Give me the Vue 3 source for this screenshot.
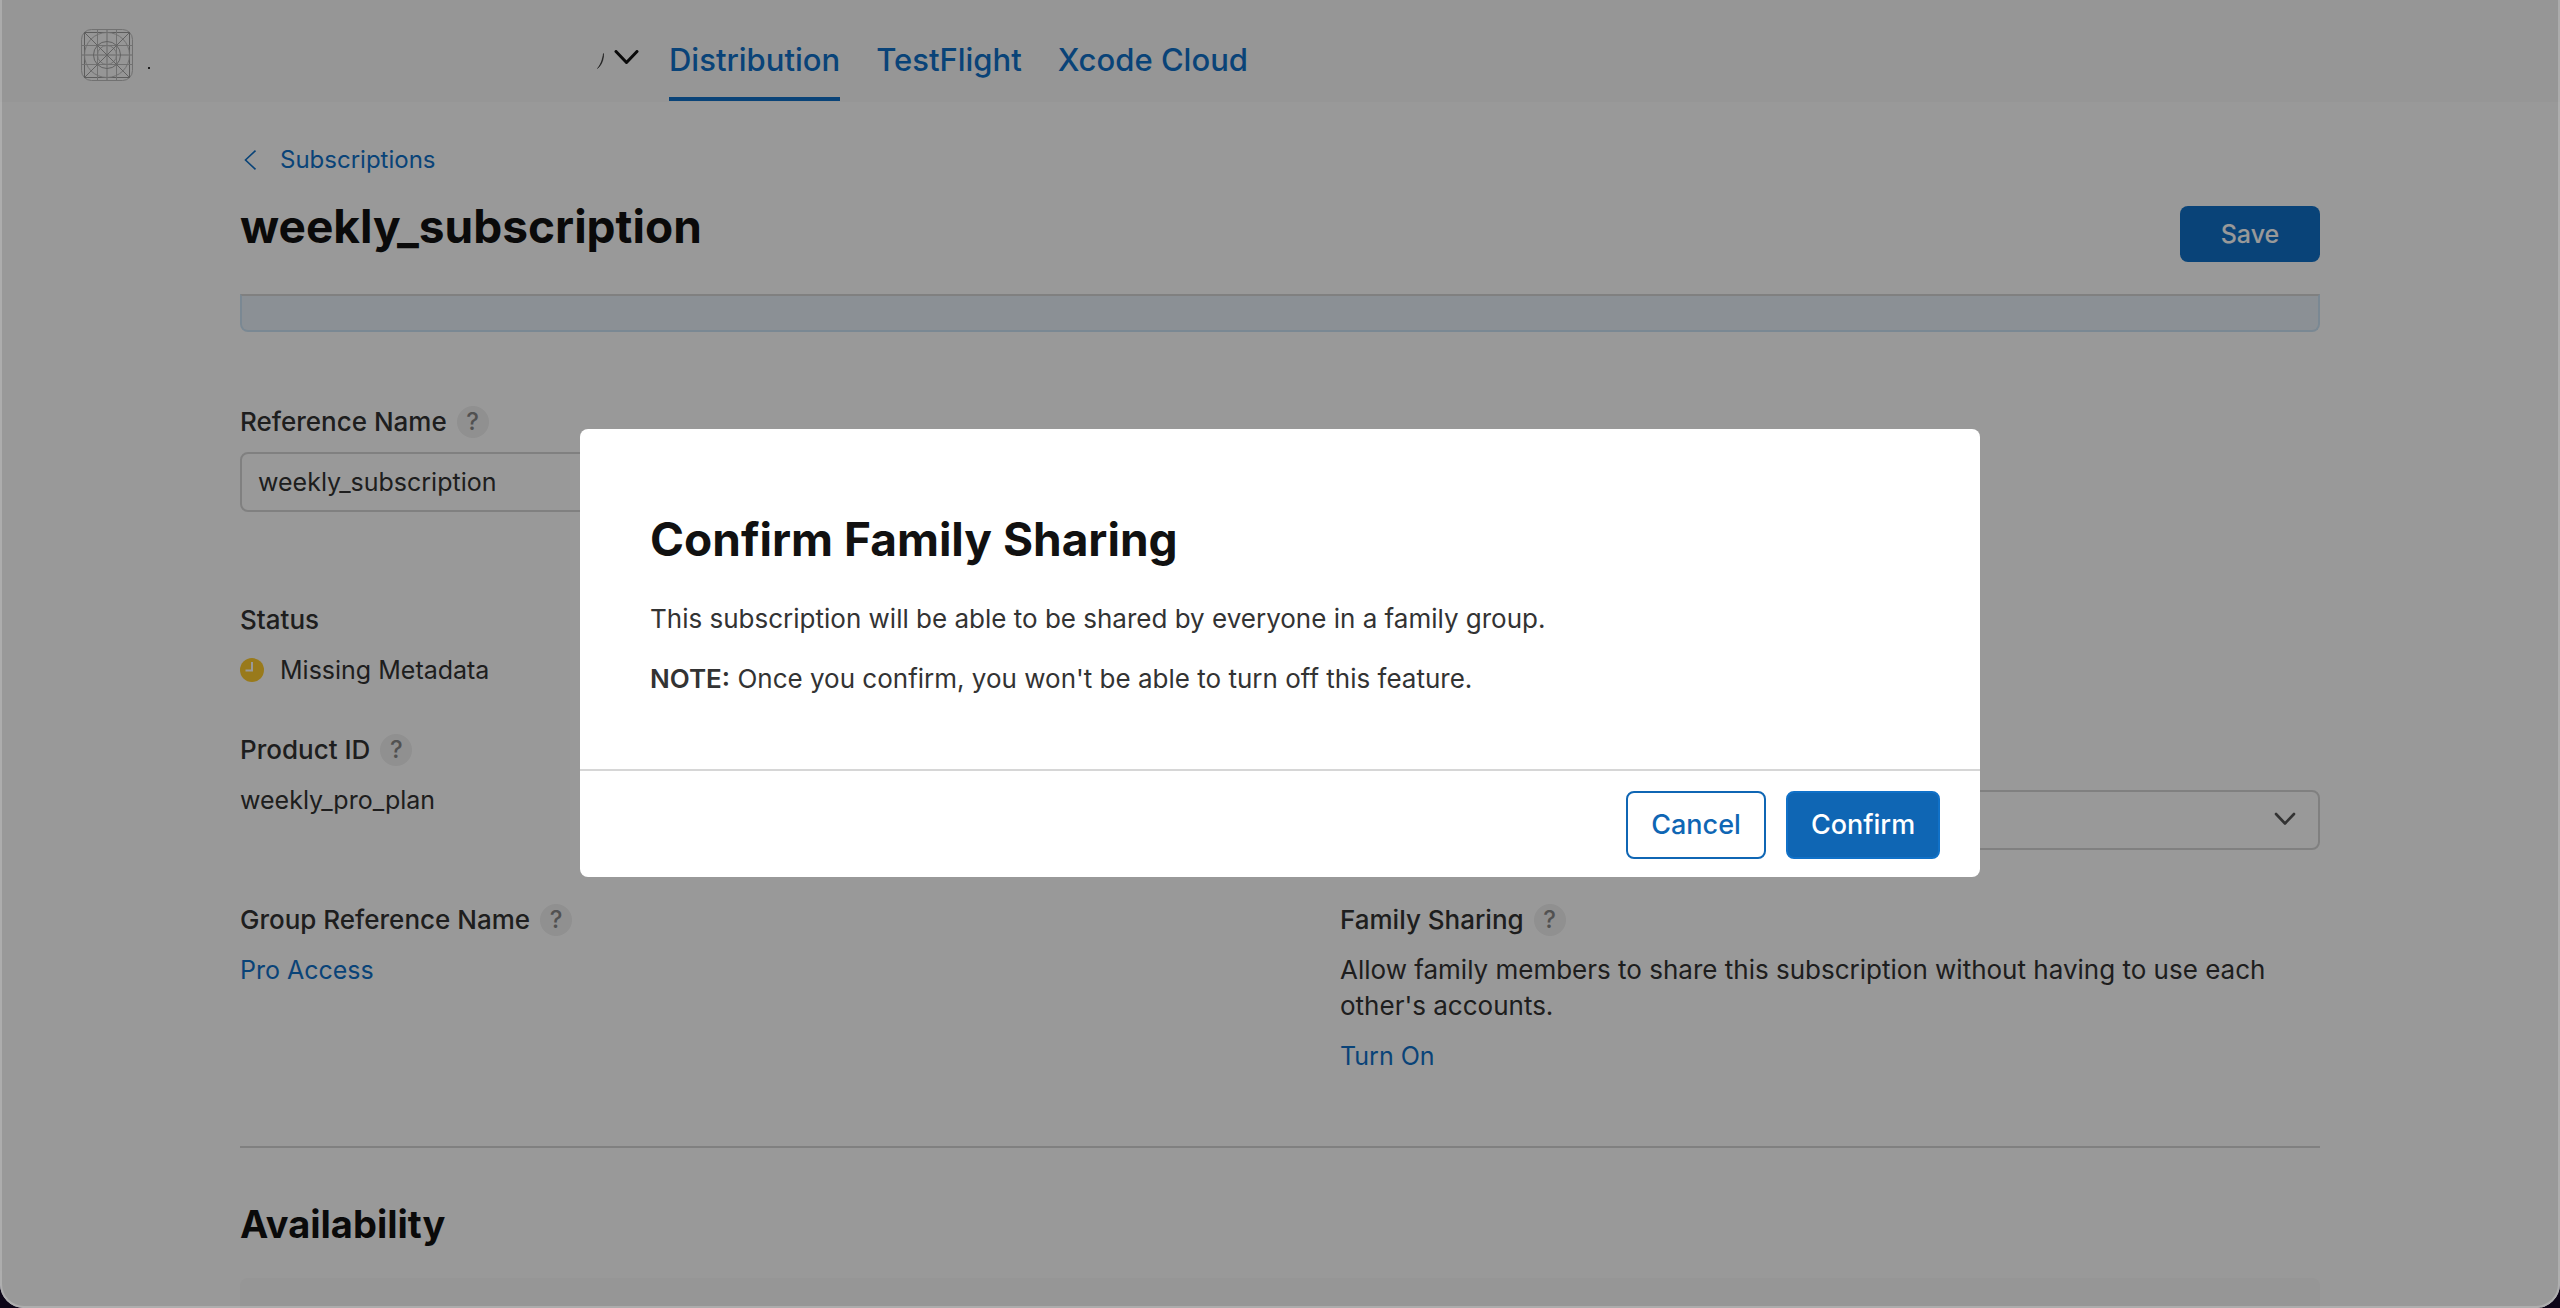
<script setup>
import { ref } from 'vue'

const referenceName = ref('weekly_subscription')
const tabs = [
  { label: 'Distribution', active: true },
  { label: 'TestFlight', active: false },
  { label: 'Xcode Cloud', active: false },
]
</script>

<template>
  <div class="window">
    <header class="topbar">
      <div class="app-id">
        <svg class="app-icon" width="52" height="52" viewBox="0 0 52 52" fill="none" stroke="#bcbcbc">
          <path d="M26 0V52M0 26H52" stroke-width="2" stroke="#d4d4d4" />
          <rect x="0.5" y="0.5" width="51" height="51" rx="10" />
          <rect x="3.5" y="3.5" width="45" height="45" stroke="#9c9c9c" />
          <circle cx="26" cy="26" r="22.5" />
          <circle cx="26" cy="26" r="13.5" stroke="#a4a4a4" />
          <circle cx="26" cy="26" r="9.5" />
          <path d="M16.5 0V52M35.5 0V52M0 16.5H52M0 35.5H52" />
          <path d="M3.5 3.5L48.5 48.5M48.5 3.5L3.5 48.5" stroke="#a4a4a4" />
        </svg>
        <i class="dot"></i>
      </div>
      <button class="switcher" aria-label="Switch app">
        <svg width="42" height="20" viewBox="0 0 42 20" fill="none">
          <path d="M6.5 3.5C6.8 9 5 14.5 0.5 18.5C4.5 13.5 5.5 9 6.5 3.5Z" fill="#222" stroke="#333" stroke-width="0.6" />
          <path d="M19 1.5L29.5 12.5L40 1.5" stroke="#111" stroke-width="3" stroke-linecap="round" stroke-linejoin="round" />
        </svg>
      </button>
      <nav class="tabs">
        <a v-for="tab in tabs" :key="tab.label" href="#" class="tab" :class="{ active: tab.active }">{{ tab.label }}</a>
      </nav>
    </header>

    <main class="content">
      <a href="#" class="back">
        <svg width="24" height="20" viewBox="0 0 24 20" fill="none" stroke="currentColor" stroke-width="1.6">
          <path d="M15.5 0.7L5.5 10L15.5 19.3" />
        </svg>
        <span>Subscriptions</span>
      </a>
      <div class="title-row">
        <h1>weekly_subscription</h1>
        <button class="save">Save</button>
      </div>
      <div class="banner"></div>

      <div class="columns top">
        <div class="field">
          <div class="label-row">
            <label for="reference-name">Reference Name</label>
            <button class="help" aria-label="About the reference name">?</button>
          </div>
          <input id="reference-name" v-model="referenceName" class="control" type="text" />
        </div>
      </div>

      <div class="columns">
        <div class="stack">
          <div class="status-field">
            <div class="label-row"><span class="label">Status</span></div>
            <p class="status">
              <svg width="24" height="24" viewBox="0 0 24 24">
                <circle cx="12" cy="12" r="12" fill="#ffcc2e" />
                <path d="M12 4V12.5H5.5" fill="none" stroke="#fff" stroke-width="2" />
              </svg>
              <span>Missing Metadata</span>
            </p>
          </div>
          <div>
            <div class="label-row">
              <span class="label">Product ID</span>
              <button class="help" aria-label="About the product ID">?</button>
            </div>
            <p>weekly_pro_plan</p>
          </div>
        </div>
        <div class="select-cell">
          <div class="select-wrap">
            <select class="control" aria-label="Subscription duration"><option></option></select>
            <svg class="select-arrow" width="22" height="14" viewBox="0 0 22 14" fill="none" stroke="#555" stroke-width="2.6" stroke-linecap="round" stroke-linejoin="round">
              <path d="M2 2L11 11.5L20 2" />
            </svg>
          </div>
        </div>
      </div>

      <div class="columns groups">
        <div>
          <div class="label-row">
            <span class="label">Group Reference Name</span>
            <button class="help" aria-label="About the group reference name">?</button>
          </div>
          <p><a href="#">Pro Access</a></p>
        </div>
        <div>
          <div class="label-row">
            <span class="label">Family Sharing</span>
            <button class="help" aria-label="About family sharing">?</button>
          </div>
          <p class="hint">Allow family members to share this subscription without having to use each other's accounts.</p>
          <p class="turn-on"><a href="#">Turn On</a></p>
        </div>
      </div>

      <section class="availability">
        <h2>Availability</h2>
        <div class="panel"></div>
      </section>
    </main>

    <div class="backdrop">
      <div class="dialog" role="dialog" aria-modal="true" aria-labelledby="dialog-title">
        <div class="dialog-body">
          <h2 id="dialog-title">Confirm Family Sharing</h2>
          <p>This subscription will be able to be shared by everyone in a family group.</p>
          <p><strong>NOTE:</strong> Once you confirm, you won't be able to turn off this feature.</p>
        </div>
        <div class="dialog-footer">
          <button class="cancel">Cancel</button>
          <button class="confirm">Confirm</button>
        </div>
      </div>
    </div>
  </div>
</template>

<style>
html,
body {
  background: #0d0618;
}
</style>

<style scoped>
* {
  box-sizing: border-box;
}

.window {
  position: relative;
  display: flex;
  flex-direction: column;
  height: 100vh;
  overflow: hidden;
  border-radius: 0 0 24px 24px;
  background: #fff;
  color: #333;
  font: 400 25px/36px Inter, "Liberation Sans", sans-serif;
}

h1,
h2,
p {
  margin: 0;
}

a {
  color: #1071c8;
  text-decoration: none;
}

button,
input,
select {
  font: inherit;
  color: inherit;
}

button {
  padding: 0;
  border: 0;
  background: none;
}

.topbar {
  display: flex;
  flex: none;
  height: 102px;
  padding-left: 81px;
  background: #fafafa;
}

.app-id {
  display: flex;
  width: 516px;
  padding-top: 29px;
}

.dot {
  width: 2px;
  height: 2px;
  margin: 38px 0 0 15px;
  background: #333;
}

.switcher {
  display: flex;
  margin: 50px 30px 0 0;
  height: 20px;
}

.tabs {
  display: flex;
  gap: 36px;
}

.tab {
  height: 101px;
  padding-top: 40px;
  border-bottom: 4px solid transparent;
  font-size: 31px;
  font-weight: 500;
  line-height: 40px;
}

.tab.active {
  border-color: #1071c8;
}

.content {
  display: flex;
  flex: 1;
  flex-direction: column;
  padding: 40px 240px 0;
}

.back {
  display: flex;
  align-items: center;
  gap: 16px;
  font-size: 24px;
}

.title-row {
  display: flex;
  align-items: flex-start;
  justify-content: space-between;
}

h1 {
  padding-top: 18px;
  color: #111;
  font-size: 46px;
  font-weight: 700;
  line-height: 60px;
}

.save {
  width: 140px;
  height: 56px;
  margin-top: 28px;
  border-radius: 8px;
  background: #1071c8;
  color: #fff;
  font-weight: 500;
}

.banner {
  height: 38px;
  margin-top: 32px;
  border: 2px solid #cce3f5;
  border-top-color: #d6d6d6;
  border-radius: 0 0 8px 8px;
  background: #e8f1f8;
}

.columns {
  display: grid;
  grid-template-columns: 1fr 1fr;
  column-gap: 120px;
}

.columns.top {
  margin: 72px 0 90px;
}

.label-row {
  display: flex;
  align-items: center;
  gap: 10px;
  height: 36px;
  margin-bottom: 14px;
}

label,
.label {
  font-size: 26px;
  font-weight: 500;
}

.help {
  width: 32px;
  height: 32px;
  border-radius: 50%;
  background: #f0f0f0;
  color: #888;
  font-size: 24px;
  font-weight: 500;
  line-height: 32px;
}

.field .label-row {
  margin-bottom: 12px;
}

.control {
  display: block;
  width: 100%;
  height: 60px;
  padding: 0 16px;
  border: 2px solid #d6d6d6;
  border-radius: 8px;
  background: #fff;
  outline: 0;
  appearance: none;
}

.status-field {
  margin-bottom: 44px;
}

.status {
  display: flex;
  align-items: center;
  gap: 16px;
}

.select-cell {
  padding-top: 188px;
}

.select-wrap {
  position: relative;
}

.select-arrow {
  position: absolute;
  top: 22px;
  right: 24px;
}

.groups {
  margin-top: 52px;
}

.hint {
  font-size: 26px;
}

.turn-on {
  margin-top: 14px;
}

.availability {
  display: flex;
  flex: 1;
  flex-direction: column;
  margin-top: 72px;
  padding-top: 50px;
  border-top: 2px solid #d6d6d6;
}

.availability h2 {
  margin-bottom: 28px;
  color: #111;
  font-size: 38px;
  font-weight: 700;
  line-height: 52px;
}

.panel {
  flex: 1;
  border-radius: 8px 8px 0 0;
  background: #fafafa;
}

.backdrop {
  position: absolute;
  inset: 0;
  display: flex;
  align-items: center;
  justify-content: center;
  border: 2px solid rgba(255, 255, 255, 0.2);
  border-top: 0;
  border-radius: 0 0 24px 24px;
  background: rgba(0, 0, 0, 0.4);
}

.dialog {
  width: 1400px;
  max-width: 90%;
  border-radius: 8px;
  background: #fff;
}

.dialog-body {
  padding: 80px 70px 72px;
}

.dialog-body h2 {
  margin-bottom: 32px;
  color: #111;
  font-size: 46px;
  font-weight: 700;
  line-height: 60px;
}

.dialog-body p {
  margin-bottom: 24px;
  font-size: 26px;
}

.dialog-body p:last-child {
  margin-bottom: 0;
}

strong {
  font-weight: 600;
}

.dialog-footer {
  display: flex;
  justify-content: flex-end;
  gap: 20px;
  padding: 20px 40px 18px;
  border-top: 2px solid #d6d6d6;
}

.cancel,
.confirm {
  width: 140px;
  height: 68px;
  border: 2px solid #0f66b4;
  border-radius: 8px;
  color: #0f66b4;
  font-size: 27px;
  font-weight: 500;
}

.confirm {
  width: 154px;
  border-color: #1071c8;
  background: #0f66b4;
  color: #fff;
}
</style>
